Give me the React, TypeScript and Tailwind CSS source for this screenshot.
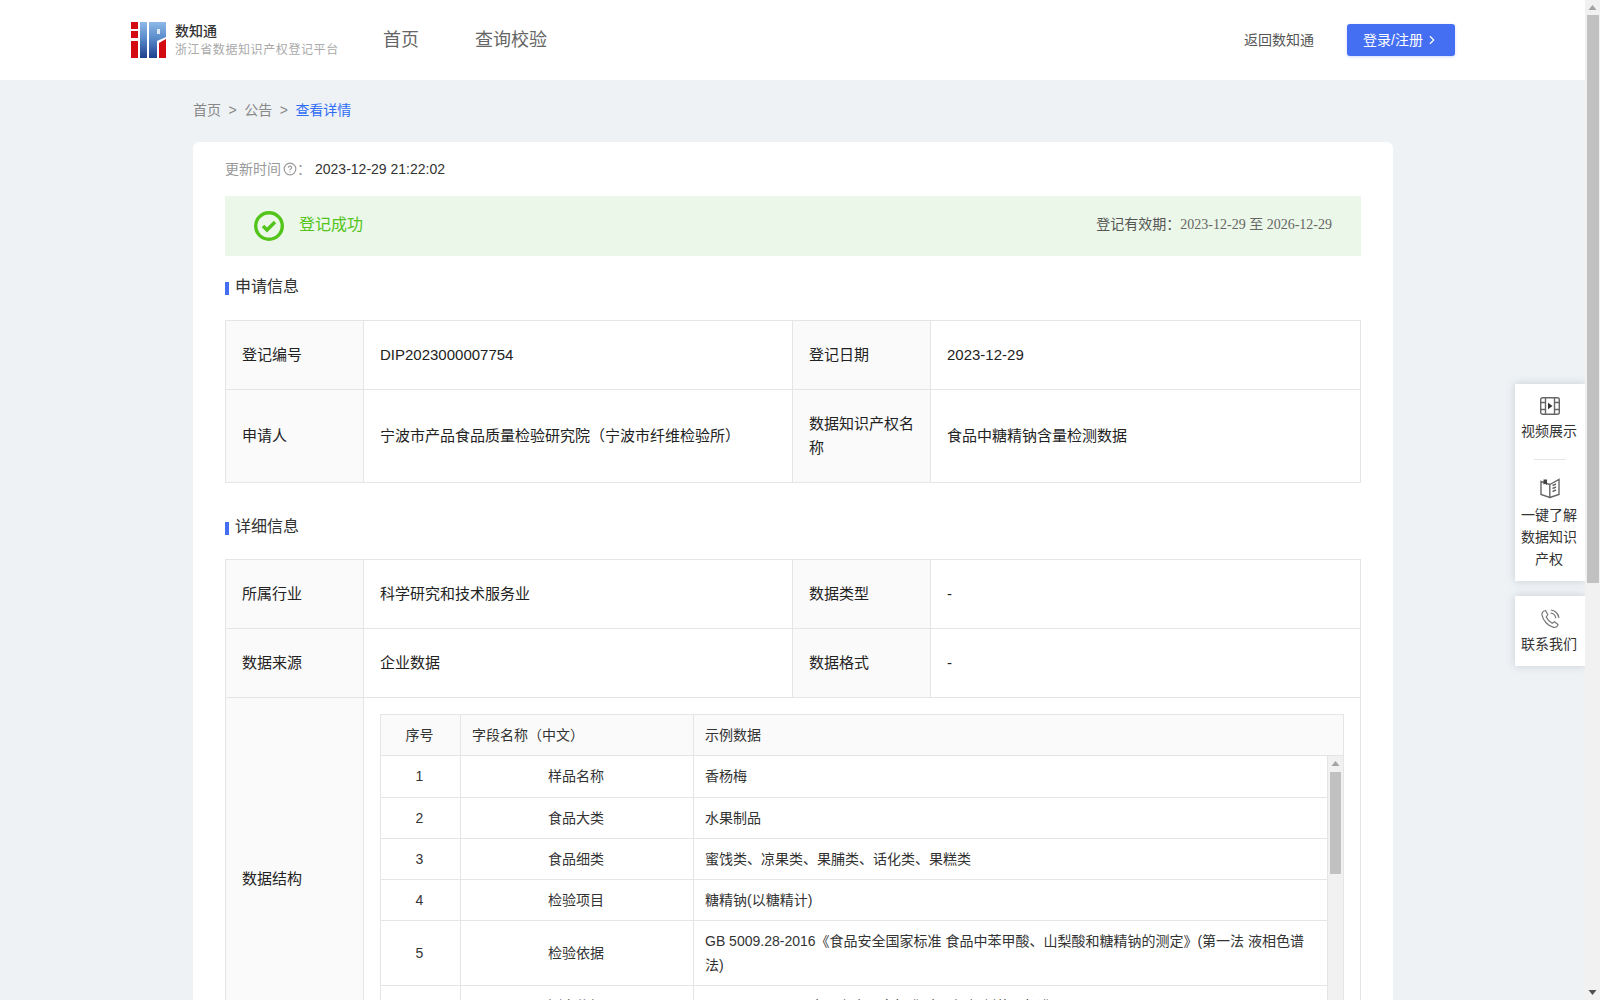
import { ChevronRight, CircleHelp } from "lucide-react";

const fields = [
  { no: "1", name: "样品名称", sample: "香杨梅" },
  { no: "2", name: "食品大类", sample: "水果制品" },
  { no: "3", name: "食品细类", sample: "蜜饯类、凉果类、果脯类、话化类、果糕类" },
  { no: "4", name: "检验项目", sample: "糖精钠(以糖精计)" },
  {
    no: "5",
    name: "检验依据",
    sample: "GB 5009.28-2016《食品安全国家标准 食品中苯甲酸、山梨酸和糖精钠的测定》(第一法 液相色谱法)",
  },
  { no: "6", name: "测定依据", sample: "GB 2760-2014《食品安全国家标准 食品添加剂使用标准》" },
  { no: "7", name: "检验结果", sample: "未检出" },
];

function Logo() {
  return (
    <svg width="36" height="36" viewBox="0 0 36 36" className="shrink-0">
      <defs>
        <linearGradient id="logoBlue" x1="0" y1="0" x2="0" y2="1">
          <stop offset="0" stopColor="#8db8e8" />
          <stop offset="0.45" stopColor="#5a8ccb" />
          <stop offset="1" stopColor="#1f3f8f" />
        </linearGradient>
      </defs>
      <rect x="0" y="0" width="7" height="36" fill="#d40a12" />
      <rect x="0" y="7" width="7" height="2" fill="#fff" />
      <rect x="0" y="16" width="7" height="3" fill="#fff" />
      <rect x="9" y="0" width="7" height="36" fill="url(#logoBlue)" />
      <path d="M18 0H35V15L26 19V36H18Z" fill="url(#logoBlue)" />
      <rect x="26" y="7" width="3" height="5" fill="#dce9f7" />
      <path d="M28 21L35 17V36H28Z" fill="#d40a12" />
    </svg>
  );
}

function SectionTitle({ title }: { title: string }) {
  return (
    <div className="flex h-6 items-center text-base text-[#333]">
      <span className="mr-[6px] mt-[3px] h-[13px] w-1 bg-[#446ff2]" />
      {title}
    </div>
  );
}

function Label({ children }: { children: React.ReactNode }) {
  return (
    <td className="border border-[#e5e5e5] bg-[#fafafa] px-4 py-2 align-middle text-[15px] leading-6 text-[#222]">
      {children}
    </td>
  );
}

function Value({ children }: { children: React.ReactNode }) {
  return (
    <td className="border border-[#e5e5e5] px-4 py-2 align-middle text-[15px] leading-6 text-[#222]">
      {children}
    </td>
  );
}

function InfoCols() {
  return (
    <colgroup>
      <col className="w-[138px]" />
      <col className="w-[429px]" />
      <col className="w-[138px]" />
      <col />
    </colgroup>
  );
}

function FieldTable() {
  return (
    <div className="w-[964px]">
      <table className="w-full table-fixed border-collapse text-sm text-[#333]">
        <colgroup>
          <col className="w-[80px]" />
          <col className="w-[233px]" />
          <col />
        </colgroup>
        <thead>
          <tr className="h-[41px] bg-[#fafafa]">
            <th className="border border-[#e5e5e5] pr-[2px] text-center font-normal">序号</th>
            <th className="border border-[#e5e5e5] pl-[11px] pr-3 text-left font-normal">字段名称（中文）</th>
            <th className="border border-[#e5e5e5] pl-[11px] pr-3 text-left font-normal">示例数据</th>
          </tr>
        </thead>
      </table>
      <div className="flex h-[287px] overflow-hidden border-r border-[#e5e5e5]">
        <table className="w-[949px] table-fixed self-start border-collapse text-sm leading-6 text-[#333]">
          <colgroup>
            <col className="w-[80px]" />
            <col className="w-[233px]" />
            <col />
          </colgroup>
          <tbody>
            {fields.map((f) => (
              <tr key={f.no} className="h-[41px]">
                <td className="border border-t-0 border-[#e5e5e5] pr-[2px] text-center">{f.no}</td>
                <td className="border border-t-0 border-[#e5e5e5] pr-[2px] text-center">{f.name}</td>
                <td className="border border-t-0 border-[#e5e5e5] py-2 pl-[11px] pr-3">{f.sample}</td>
              </tr>
            ))}
          </tbody>
        </table>
        <div className="flex w-[15px] shrink-0 flex-col items-center bg-[#f1f1f1]">
          <svg width="9" height="16" viewBox="0 0 9 16" className="shrink-0">
            <path d="M4.5 5L8.5 10H0.5Z" fill="#a3a3a3" />
          </svg>
          <div className="h-[102px] w-[11px] bg-[#c1c1c1]" />
        </div>
      </div>
    </div>
  );
}

function SideButton({
  icon,
  lines,
  textClass = "mt-[5px]",
}: {
  icon: React.ReactNode;
  lines: string;
  textClass?: string;
}) {
  return (
    <div className="flex flex-col items-center">
      {icon}
      <div className={`-ml-[2px] w-[56px] text-center text-sm leading-[22px] text-[#333] ${textClass}`}>{lines}</div>
    </div>
  );
}

function SidePanel() {
  return (
    <div className="absolute right-0 top-[384px] flex w-[70px] flex-col gap-[15px]">
      <div className="flex h-[197px] flex-col items-center bg-white pt-[13px] shadow-[0_0_8px_rgba(90,100,120,0.25)]">
        <SideButton
          lines="视频展示"
          icon={
            <svg width="20" height="18" viewBox="0 0 20 18" fill="none" stroke="#666" strokeWidth="1.4">
              <rect x="0.7" y="0.7" width="18.6" height="16.6" rx="2" />
              <path d="M5.5 1V17M14.5 1V17M1 5.5H5.5M1 12.5H5.5M14.5 5.5H19M14.5 12.5H19" />
              <path d="M8 5.8L12.5 9L8 12.2Z" fill="#333" stroke="none" />
            </svg>
          }
        />
        <div className="mb-[18px] mt-[17px] h-px w-8 bg-[#e5e5e5]" />
        <SideButton
          lines="一键了解数据知识产权"
          icon={
            <svg width="20" height="21" viewBox="0 0 20 21" fill="none" stroke="#666" strokeWidth="1.4">
              <path d="M1 3.5L9.8 6.5V19.5L1 16.5Z" />
              <path d="M9.8 6.5L19 1.5V16.5L9.8 19.5" />
              <path d="M12.5 7.5L16 6M12.5 10.5L16 9M12.5 13.5L16 12" />
              <path d="M3.5 1.5H7V7L5.2 5.8L3.5 6.5Z" fill="#444" stroke="none" />
            </svg>
          }
        />
      </div>
      <div className="flex h-[70px] flex-col items-center bg-white pt-[13px] shadow-[0_0_8px_rgba(90,100,120,0.25)]">
        <SideButton
          lines="联系我们"
          textClass="mt-[4px]"
          icon={
            <svg width="20" height="20" viewBox="0 0 20 20" fill="none" stroke="#777" strokeWidth="1.2">
              <path d="M5.5 1.5C3 2 1.5 3.8 2 6.2C3 11.5 8 17 13.5 18.3C16 18.8 17.8 17.3 18 15.5L14.5 12.8L12.2 14.2C9.8 13 7.3 10.5 6.2 8L7.8 5.8Z" />
              <path d="M10.5 4C13.2 4.3 15.5 6.5 15.8 9.3" />
              <path d="M10.8 1C15 1.3 18.5 4.7 18.9 9" />
            </svg>
          }
        />
      </div>
    </div>
  );
}

function PageScrollbar() {
  return (
    <div className="flex w-[15px] shrink-0 flex-col items-center bg-[#f1f1f1]">
      <svg width="9" height="15" viewBox="0 0 9 15" className="shrink-0">
        <path d="M4.5 5L8.5 10H0.5Z" fill="#a3a3a3" />
      </svg>
      <div className="h-[568px] w-[12px] bg-[#c1c1c1]" />
      <div className="flex-1" />
      <svg width="9" height="15" viewBox="0 0 9 15" className="shrink-0">
        <path d="M4.5 10L8.5 5H0.5Z" fill="#505050" />
      </svg>
    </div>
  );
}

export default function App() {
  return (
    <div className="flex h-screen overflow-hidden bg-[#eef2f5] font-['Liberation_Sans','Noto_Sans_CJK_SC',sans-serif]">
      <div className="relative flex-1 overflow-hidden">
        <header className="flex h-20 items-center bg-white pl-[131px] pr-[130px]">
          <Logo />
          <div className="ml-2 w-[208px]">
            <div className="text-sm font-medium leading-5 text-[#333]">数知通</div>
            <div className="text-xs leading-[18px] tracking-[0.6px] text-[#aaa]">浙江省数据知识产权登记平台</div>
          </div>
          <nav className="flex gap-[56px] text-lg text-[#666]">
            <span>首页</span>
            <span>查询校验</span>
          </nav>
          <div className="flex-1" />
          <span className="text-sm text-[#555]">返回数知通</span>
          <button className="ml-[33px] flex h-8 w-[108px] items-center justify-center gap-[2px] rounded-[3px] bg-[#446ff2] pb-px text-sm text-white shadow-[0_1px_3px_rgba(68,111,242,0.25)]">
            登录/注册
            <ChevronRight size={14} />
          </button>
        </header>

        <div className="mb-[2px] flex h-[60px] items-center pl-[193px] text-sm text-[#888]">
          <span>首页</span>
          <span className="mx-[7.5px]">&gt;</span>
          <span>公告</span>
          <span className="mx-[7.5px]">&gt;</span>
          <span className="text-[#2f6df6]">查看详情</span>
        </div>

        <main className="ml-[193px] w-[1200px] rounded-md bg-white px-8 pt-4">
          <div className="flex h-[22px] items-center text-sm">
            <span className="text-[#999]">更新时间</span>
            <CircleHelp size={14} className="ml-[2px] text-[#999]" />
            <span className="text-[#999]">：</span>
            <span className="ml-1 text-[#333]">2023-12-29 21:22:02</span>
          </div>

          <div className="mt-4 flex h-[60px] items-center bg-[#ebf7e8] pl-[29px] pr-[29px]">
            <svg width="30" height="30" viewBox="0 0 30 30" fill="none">
              <circle cx="15" cy="15" r="13.3" stroke="#52c41a" strokeWidth="3.4" />
              <path d="M9 15L13 19L21 11" stroke="#52c41a" strokeWidth="3.4" />
            </svg>
            <span className="mb-[2px] ml-[15px] text-base text-[#52c41a]">登记成功</span>
            <div className="flex-1" />
            <span className="mb-[3px] text-sm text-[#555]">
              登记有效期：
              <span className="font-['Liberation_Serif','Noto_Sans_CJK_SC',serif] text-[#666]">2023-12-29 至 2026-12-29</span>
            </span>
          </div>

          <div className="mb-[21px] mt-[19px]">
            <SectionTitle title="申请信息" />
          </div>
          <table className="w-full table-fixed border-collapse">
            <InfoCols />
            <tbody>
              <tr className="h-[69px]">
                <Label>登记编号</Label>
                <Value>DIP2023000007754</Value>
                <Label>登记日期</Label>
                <Value>2023-12-29</Value>
              </tr>
              <tr className="h-[93px]">
                <Label>申请人</Label>
                <Value>宁波市产品食品质量检验研究院（宁波市纤维检验所）</Value>
                <Label>数据知识产权名称</Label>
                <Value>食品中糖精钠含量检测数据</Value>
              </tr>
            </tbody>
          </table>

          <div className="mb-[20px] mt-[32px]">
            <SectionTitle title="详细信息" />
          </div>
          <table className="w-full table-fixed border-collapse">
            <InfoCols />
            <tbody>
              <tr className="h-[69px]">
                <Label>所属行业</Label>
                <Value>科学研究和技术服务业</Value>
                <Label>数据类型</Label>
                <Value>-</Value>
              </tr>
              <tr className="h-[69px]">
                <Label>数据来源</Label>
                <Value>企业数据</Value>
                <Label>数据格式</Label>
                <Value>-</Value>
              </tr>
              <tr>
                <Label>数据结构</Label>
                <td colSpan={3} className="border border-[#e5e5e5] py-4 pl-4 pr-4">
                  <FieldTable />
                </td>
              </tr>
            </tbody>
          </table>
        </main>

        <SidePanel />
      </div>
      <PageScrollbar />
    </div>
  );
}
